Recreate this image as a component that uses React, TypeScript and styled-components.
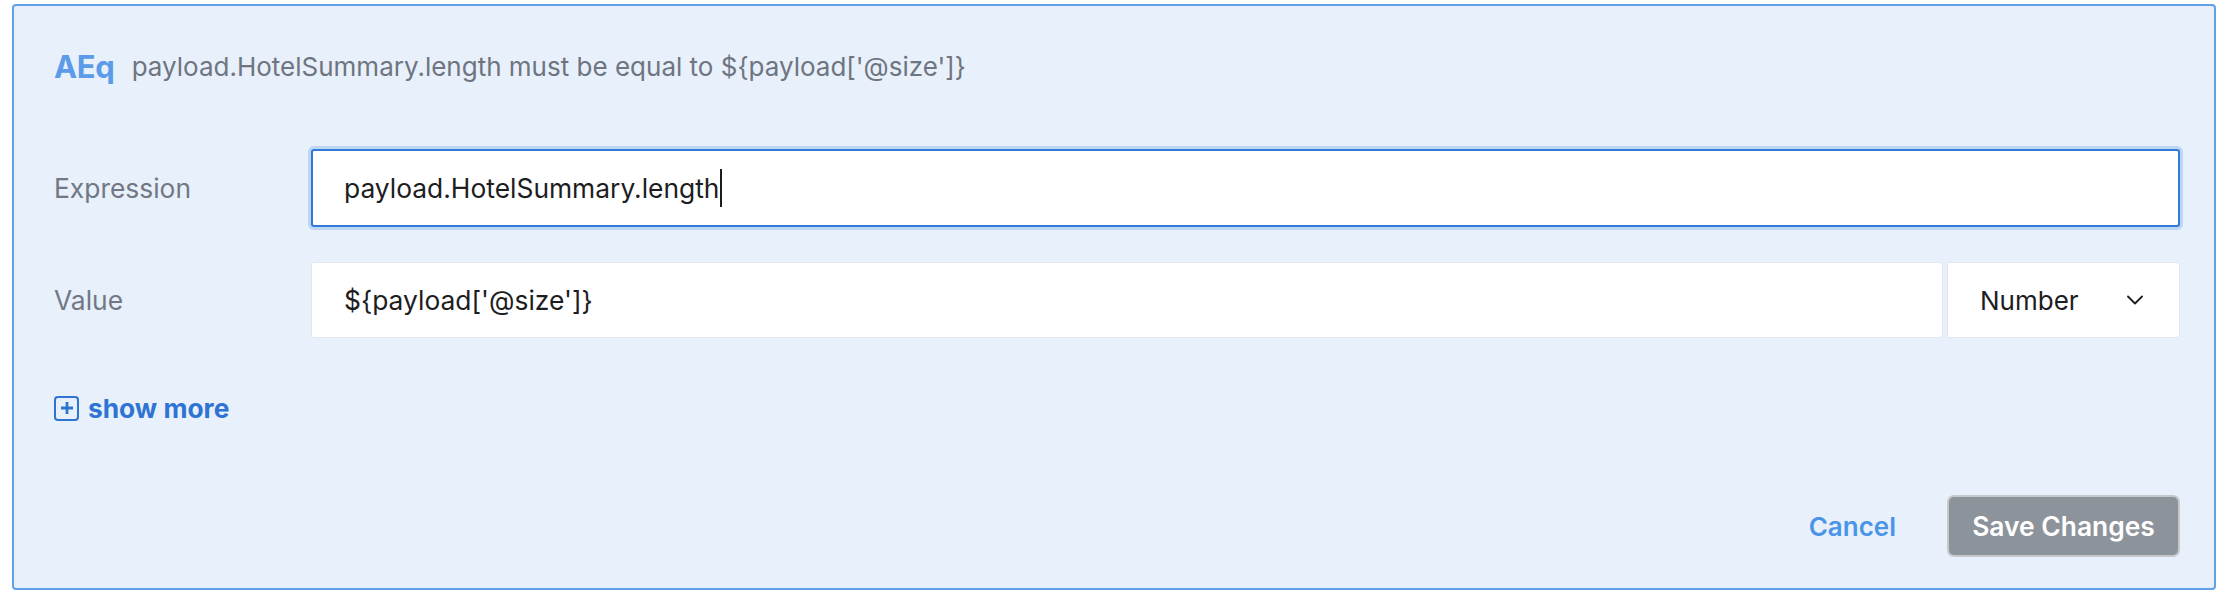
import React from "react";
import styled, { createGlobalStyle } from "styled-components";

const GlobalStyle = createGlobalStyle`
  html, body {
    margin: 0;
    padding: 0;
    background: #ffffff;
  }
  body {
    font-family: Inter, "Liberation Sans", sans-serif;
  }
  * { box-sizing: border-box; }
`;

const Page = styled.div`
  padding: 4px 20px 0 12px;
`;

const Panel = styled.section`
  height: 586px;
  background: #e8f0fb;
  border: 2px solid #63a0ea;
  border-radius: 4px;
  padding: 0 34px 31px 40px;
  display: flex;
  flex-direction: column;
`;

const Header = styled.header`
  height: 120px;
  display: flex;
  align-items: center;
  gap: 17px;
`;

const Code = styled.span`
  font-size: 31px;
  font-weight: 700;
  color: #5b9be9;
  letter-spacing: -0.3px;
`;

const Description = styled.span`
  font-size: 26px;
  color: #6e7580;
`;

const Form = styled.div`
  margin-top: 23px;
  display: grid;
  grid-template-columns: 257px 1fr;
  row-gap: 35px;
  align-items: center;
`;

const Label = styled.label`
  font-size: 26.4px;
  color: #717884;
`;

const FieldGroup = styled.div`
  display: flex;
  gap: 4px;
`;

const Field = styled.div<{ $focused?: boolean }>`
  flex: 1;
  height: ${(p) => (p.$focused ? "78px" : "76px")};
  background: #ffffff;
  border: ${(p) => (p.$focused ? "2px solid #3479d6" : "1px solid #e3e8ef")};
  box-shadow: ${(p) => (p.$focused ? "0 0 0 3px #bcd7f6" : "none")};
  border-radius: 3px;
  display: flex;
  align-items: center;
  padding-left: ${(p) => (p.$focused ? "31px" : "32px")};
  font-size: 26.4px;
  color: #1d1d1f;
  white-space: nowrap;
`;

const Caret = styled.span`
  display: inline-block;
  width: 2px;
  height: 38px;
  background: #1d1d1f;
  margin-left: 1px;
`;

const Select = styled.div`
  width: 233px;
  height: 76px;
  background: #ffffff;
  border: 1px solid #e3e8ef;
  border-radius: 3px;
  display: flex;
  align-items: center;
  justify-content: space-between;
  padding: 0 36px 0 32px;
  font-size: 26px;
  color: #1d1d1f;
`;

const ShowMore = styled.button`
  margin-top: 58px;
  height: 24px;
  align-self: flex-start;
  display: flex;
  align-items: center;
  gap: 9px;
  padding: 0;
  border: none;
  background: none;
  font-family: inherit;
  font-size: 26.3px;
  font-weight: 700;
  color: #2f74d3;
  cursor: pointer;
`;

const PlusBox = styled.span`
  width: 25px;
  height: 25px;
  border: 2.5px solid #2f74d3;
  border-radius: 4px;
  display: flex;
  align-items: center;
  justify-content: center;
`;

const Footer = styled.footer`
  margin-top: auto;
  display: flex;
  justify-content: flex-end;
  align-items: center;
  gap: 51px;
`;

const CancelButton = styled.button`
  padding: 0;
  border: none;
  background: none;
  font-family: inherit;
  font-size: 26px;
  font-weight: 600;
  color: #4a94e8;
  cursor: pointer;
`;

const SaveButton = styled.button`
  width: 233px;
  height: 62px;
  border: 2px solid #c6c8cb;
  border-radius: 7px;
  background: #8d939a;
  color: #ffffff;
  font-family: inherit;
  font-size: 26.4px;
  font-weight: 600;
  cursor: pointer;
`;

const Chevron = () => (
  <svg width="16" height="10" viewBox="0 0 16 10" fill="none">
    <path d="M1 1.5l7 7 7-7" stroke="#1d1d1f" strokeWidth="1.8" strokeLinecap="round" strokeLinejoin="round" />
  </svg>
);

const Plus = () => (
  <svg width="14" height="14" viewBox="0 0 14 14" fill="none">
    <path d="M7 1v12M1 7h12" stroke="#2f74d3" strokeWidth="2.8" />
  </svg>
);

const sizeExpr = "${payload['@size']}";

export default function App() {
  return (
    <Page>
      <GlobalStyle />
      <Panel>
        <Header>
          <Code>AEq</Code>
          <Description>{`payload.HotelSummary.length must be equal to ${sizeExpr}`}</Description>
        </Header>
        <Form>
          <Label>Expression</Label>
          <Field $focused>
            payload.HotelSummary.length
            <Caret />
          </Field>
          <Label>Value</Label>
          <FieldGroup>
            <Field>{sizeExpr}</Field>
            <Select>
              <span>Number</span>
              <Chevron />
            </Select>
          </FieldGroup>
        </Form>
        <ShowMore>
          <PlusBox>
            <Plus />
          </PlusBox>
          show more
        </ShowMore>
        <Footer>
          <CancelButton>Cancel</CancelButton>
          <SaveButton>Save Changes</SaveButton>
        </Footer>
      </Panel>
    </Page>
  );
}
